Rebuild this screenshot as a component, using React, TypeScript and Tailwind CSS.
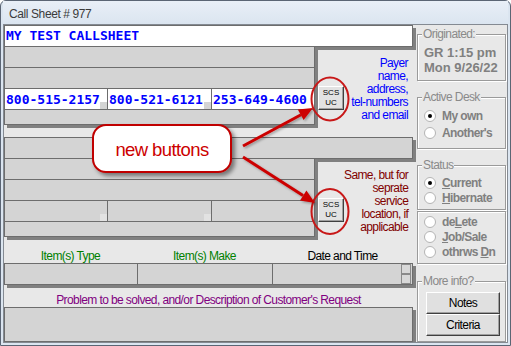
import React from "react";

const line = "border-[#6d6d6d]";
const mono = "font-['DejaVu_Sans_Mono',monospace] font-bold text-[13px] leading-[13px] tracking-normal text-[#0000ff]";

function SmallButton() {
  return (
    <div className="flex h-[24px] w-[26px] flex-col items-center justify-center border border-t-white border-l-white border-r-[#404040] border-b-[#404040] bg-[#e2e2e2] text-[8px] leading-[10px] tracking-normal text-black shadow-[inset_-1px_-1px_0_#a0a0a0]">
      <span>SCS</span>
      <span>UC</span>
    </div>
  );
}

function PhoneCell({ cls, text, white, square }: { cls: string; text?: string; white: boolean; square: boolean }) {
  return (
    <div className={`relative flex h-full items-center pl-[1px] ${white ? "bg-white" : ""} ${cls}`}>
      {text && <span className={mono}>{text}</span>}
      {square && (
        <span className={`absolute bottom-0 right-0 h-[7px] w-[7px] ${white ? "bg-[#d4d4d4]" : "bg-[#e2e2e2]"}`} />
      )}
    </div>
  );
}

function Panel({ white, title, phones, note, noteColor }: { white: boolean; title?: string; phones?: string[]; note: string[]; noteColor: string }) {
  return (
    <div>
      <div className={`flex h-[22px] w-[409px] items-center border ${line} pb-[1px] pl-[1px] shadow-[3px_3px_0_#808080] ${white ? "bg-white" : "bg-[#d4d4d4]"}`}>
        {title && <span className={mono}>{title}</span>}
      </div>
      <div className="flex">
        <div className={`w-[311px] border-x border-b ${line} bg-[#d4d4d4] shadow-[3px_3px_0_#808080]`}>
          <div className="h-[20px]" />
          <div className={`h-[21px] border-t ${line}`} />
          <div className={`flex h-[21px] border-t ${line}`}>
            <PhoneCell cls="w-[102px]" text={phones?.[0]} white={white} square />
            <PhoneCell cls={`w-[104px] border-l ${line}`} text={phones?.[1]} white={white} square />
            <PhoneCell cls={`w-[103px] border-l ${line}`} text={phones?.[2]} white={white} square={false} />
          </div>
          <div className={`h-[15px] border-t ${line}`} />
        </div>
        <div className="flex flex-1">
          <div className="ml-[3px] mt-[39px]">
            <SmallButton />
          </div>
          <div className={`flex-1 whitespace-nowrap pr-[8px] pt-[9.5px] text-right text-[12px] leading-[13px] ${noteColor}`}>
            {note.map((l) => (
              <div key={l}>{l}</div>
            ))}
          </div>
        </div>
      </div>
    </div>
  );
}

function Group({ label, className, children }: { label?: string; className: string; children?: React.ReactNode }) {
  return (
    <div className={`relative ml-[1px] w-[89px] border border-[#9a9a9a] shadow-[1px_1px_0_#fff,inset_1px_1px_0_#fff] ${className}`}>
      {label && (
        <span className="absolute -top-[8px] left-[4px] bg-[#e8e8e8] px-[1px] text-[12px] leading-[14px] text-[#8a8a8a]">
          {label}
        </span>
      )}
      {children}
    </div>
  );
}

function Radio({ checked, children, lh }: { checked?: boolean; children: React.ReactNode; lh: string }) {
  return (
    <div className={`flex items-center pl-[6px] ${lh}`}>
      <span className="flex h-[12px] w-[12px] items-center justify-center rounded-full border border-[#b4b4b4] bg-white">
        {checked && <span className="h-[4px] w-[4px] rounded-full bg-black" />}
      </span>
      <span className="ml-[6px] text-[12px] font-bold text-[#808080]">{children}</span>
    </div>
  );
}

function WinButton({ children }: { children: React.ReactNode }) {
  return (
    <div className="flex h-[22px] w-[74px] items-center justify-center border border-t-white border-l-white border-r-[#404040] border-b-[#404040] bg-[#e0e0e0] text-[12px] text-black shadow-[inset_-1px_-1px_0_#a0a0a0]">
      {children}
    </div>
  );
}

export default function App() {
  return (
    <div className="relative flex h-[346px] w-[511px] flex-col rounded-t-[6px] border border-[#5b6574] bg-[#dbe5f0] px-[2px] pb-[2px] font-['Liberation_Sans',Arial,sans-serif] tracking-[-0.6px]">
      {/* Title bar */}
      <div className="flex h-[23px] items-center bg-gradient-to-b from-[#e9eff7] to-[#dbe5f0] pl-[6px] pt-[2px] text-[12px] tracking-[-0.4px] text-[#3b3b3b]">
        Call Sheet # 977
      </div>

      {/* Body */}
      <div className="flex flex-1 overflow-hidden border border-[#848a92] bg-[#e8e8e8]">
        {/* Left column */}
        <div className="w-[412px]">
          <Panel
            white
            title="MY TEST CALLSHEET"
            phones={["800-515-2157", "800-521-6121", "253-649-4600"]}
            note={["Payer", "name,", "address,", "tel-numbers", "and email"]}
            noteColor="text-[#0000ff]"
          />
          <div className="mt-[12px]">
            <Panel
              white={false}
              note={["Same, but for", "seprate", "service", "location, if", "applicable"]}
              noteColor="text-[#800000]"
            />
          </div>

          <div className="mt-[12px] flex h-[14px] w-[409px] text-[12px] leading-[14px]">
            <div className="w-[133px] text-center text-[#008000]">Item(s) Type</div>
            <div className="w-[135px] text-center text-[#008000]">Item(s) Make</div>
            <div className="flex-1 text-center text-black">Date and Time</div>
          </div>
          <div className={`flex h-[22px] w-[409px] border ${line} bg-[#d4d4d4] shadow-[3px_3px_0_#808080]`}>
            <div className="w-[132px]" />
            <div className={`w-[135px] border-l ${line}`} />
            <div className={`flex flex-1 justify-end border-l ${line} pr-[1px]`}>
              <div className="flex w-[10px] flex-col">
                <div className="h-[10px] border border-[#8a8a8a] bg-[#d8d8d8]" />
                <div className="h-[10px] border border-[#8a8a8a] bg-[#d8d8d8]" />
              </div>
            </div>
          </div>

          <div className="mt-[8px] h-[14px] w-[409px] text-center text-[12px] leading-[14px] text-[#800080]">
            Problem to be solved, and/or Description of Customer's Request
          </div>
          <div className={`h-[35px] w-[409px] border ${line} bg-[#d4d4d4] shadow-[3px_3px_0_#808080]`} />
        </div>

        {/* Right column */}
        <div className="flex-1">
          <Group label="Originated:" className="mt-[9px] h-[47px]">
            <div className="pl-[6px] pt-[9.5px] text-[13px] font-bold leading-[15px] tracking-normal text-[#808080]">
              <div>GR 1:15 pm</div>
              <div>Mon 9/26/22</div>
            </div>
          </Group>
          <Group label="Active Desk" className="mt-[16px] h-[52px]">
            <div className="pt-[9.5px]">
              <Radio checked lh="h-[17px]">My own</Radio>
              <Radio lh="h-[17px]">Another's</Radio>
            </div>
          </Group>
          <Group label="Status" className="mt-[16px] h-[45px]">
            <div className="pt-[9.5px]">
              <Radio checked lh="h-[15px]">
                <span className="underline">C</span>urrent
              </Radio>
              <Radio lh="h-[15px]">
                <span className="underline">H</span>ibernate
              </Radio>
            </div>
          </Group>
          <Group className="mt-[1px] h-[53px]">
            <div className="pt-[2.5px]">
              <Radio lh="h-[15px]">
                de<span className="underline">L</span>ete
              </Radio>
              <Radio lh="h-[15px]">
                <span className="underline">J</span>ob/Sale
              </Radio>
              <Radio lh="h-[15px]">
                othrws <span className="underline">D</span>n
              </Radio>
            </div>
          </Group>
          <Group label="More info?" className="mt-[17px] h-[61px]">
            <div className="flex flex-col pl-[8px] pt-[10px]">
              <WinButton>Notes</WinButton>
              <WinButton>Criteria</WinButton>
            </div>
          </Group>
        </div>
      </div>

      {/* Annotation overlay */}
      <svg className="pointer-events-none absolute left-[-1px] top-[-1px]" width="511" height="346" viewBox="0 0 511 346">
        <defs>
          <filter id="sh" x="-20%" y="-20%" width="150%" height="160%">
            <feDropShadow dx="3" dy="3" stdDeviation="2" floodColor="#000" floodOpacity="0.45" />
          </filter>
          <filter id="ash" x="-20%" y="-20%" width="150%" height="160%">
            <feDropShadow dx="1.5" dy="1.5" stdDeviation="1" floodColor="#000" floodOpacity="0.3" />
          </filter>
        </defs>
        <ellipse cx="330" cy="99" rx="18.5" ry="21.5" fill="none" stroke="#c81818" strokeWidth="2" />
        <ellipse cx="330" cy="211.5" rx="18.5" ry="22.5" fill="none" stroke="#c81818" strokeWidth="2" />
        <g filter="url(#ash)">
          <line x1="243" y1="146" x2="301" y2="114.7" stroke="#cc0000" strokeWidth="3" />
          <polygon points="313,108 303.6,120 297.8,109.4" fill="#cc0000" />
          <line x1="243" y1="157" x2="303" y2="195.5" stroke="#cc0000" strokeWidth="3" />
          <polygon points="315,203 300,200.6 306.4,190.4" fill="#cc0000" />
        </g>
        <rect x="93" y="125" width="138" height="47" rx="13" fill="#fff" stroke="#c00000" strokeWidth="2" filter="url(#sh)" />
        <text x="162" y="155.5" textAnchor="middle" fontFamily="Liberation Sans, Arial, sans-serif" fontSize="18.5" fill="#cc0000">
          new buttons
        </text>
      </svg>
    </div>
  );
}
